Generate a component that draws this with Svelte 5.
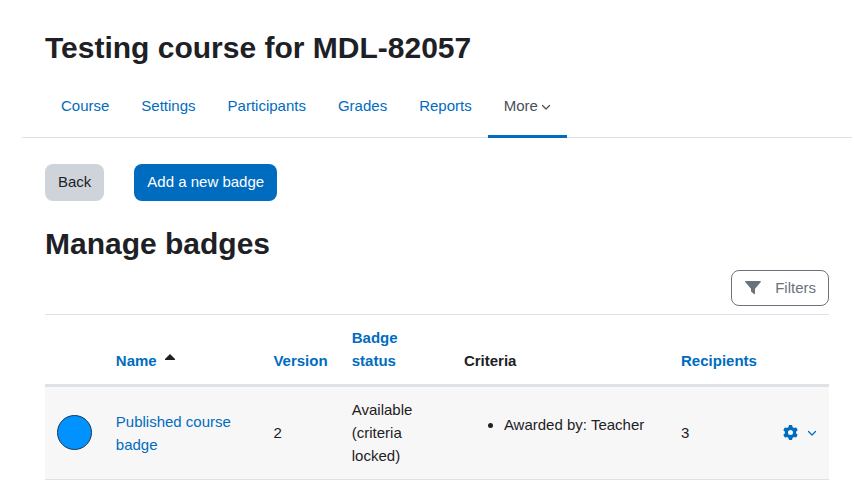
<script lang="ts">
  const tabs = ["Course", "Settings", "Participants", "Grades", "Reports"];

  const badges = [
    {
      name: "Published course badge",
      version: 2,
      status: "Available (criteria locked)",
      criteria: ["Awarded by: Teacher"],
      recipients: 3
    }
  ];
</script>

<main class="page">
  <h1>Testing course for MDL-82057</h1>

  <nav class="secondary-nav" aria-label="Course">
    {#each tabs as tab}
      <a class="tab" href="#{tab.toLowerCase()}">{tab}</a>
    {/each}
    <button class="tab active" type="button">
      More
      <svg class="chevron" viewBox="0 0 10 8" aria-hidden="true"><path d="M1.5 3.500 L5 7 L8.500 3.500" /></svg>
    </button>
  </nav>

  <div class="actions">
    <button class="btn secondary" type="button">Back</button>
    <button class="btn primary" type="button">Add a new badge</button>
  </div>

  <h2>Manage badges</h2>

  <div class="toolbar">
    <button class="btn outline" type="button">
      <svg class="filter" viewBox="0 0 16 16" aria-hidden="true">
        <path d="M.8 1 H15.200 C15.900 1 16.100 1.700 15.600 2.300 L10 8.800 V13.600 C10 14.200 9.500 14.400 9 14 L6.500 11.900 C6.200 11.700 6 11.400 6 11 V8.800 L.4 2.300 C-.1 1.700 .1 1 .8 1 Z" />
      </svg>
      Filters
    </button>
  </div>

  <table>
    <colgroup>
      <col class="image" />
      <col class="name" />
      <col class="version" />
      <col class="status" />
      <col class="criteria" />
      <col class="recipients" />
      <col class="menu" />
    </colgroup>
    <thead>
      <tr>
        <th></th>
        <th aria-sort="ascending">
          <a href="#name">Name</a>
          <svg class="sort" viewBox="0 0 10 6" aria-hidden="true"><path d="M5 0 L10 5 V6 H0 V5 Z" /></svg>
        </th>
        <th><a href="#version">Version</a></th>
        <th><a href="#status">Badge status</a></th>
        <th>Criteria</th>
        <th><a href="#recipients">Recipients</a></th>
        <th></th>
      </tr>
    </thead>
    <tbody>
      {#each badges as badge}
        <tr>
          <td>
            <svg class="badge-image" viewBox="0 0 35 35" aria-hidden="true"><circle cx="17.500" cy="17.500" r="17" /></svg>
          </td>
          <td><a href="#badge">{badge.name}</a></td>
          <td>{badge.version}</td>
          <td>{badge.status}</td>
          <td>
            <ul>
              {#each badge.criteria as item}
                <li>{item}</li>
              {/each}
            </ul>
          </td>
          <td>{badge.recipients}</td>
          <td>
            <button class="menu-button" type="button" aria-label="Actions">
              <svg class="gear" viewBox="0 0 512 512" aria-hidden="true">
                <path d="M495.900 166.600c3.200 8.700 .5 18.400-6.400 24.600l-43.300 39.400c1.100 8.300 1.700 16.800 1.700 25.400s-.6 17.100-1.700 25.400l43.300 39.400c6.900 6.200 9.600 15.900 6.400 24.600c-4.400 11.900-9.700 23.300-15.800 34.300l-4.700 8.100c-6.600 11-14 21.400-22.100 31.200c-5.900 7.200-15.700 9.600-24.500 6.800l-55.700-17.700c-13.400 10.300-28.200 18.900-44 25.400l-12.500 57.100c-2 9.100-9 16.300-18.200 17.800c-13.800 2.300-28 3.500-42.500 3.500s-28.700-1.200-42.500-3.500c-9.200-1.500-16.200-8.700-18.200-17.800l-12.500-57.100c-15.800-6.500-30.600-15.100-44-25.400L83.100 425.900c-8.800 2.800-18.600 .3-24.500-6.800c-8.100-9.800-15.500-20.200-22.100-31.200l-4.700-8.100c-6.100-11-11.400-22.400-15.800-34.300c-3.200-8.700-.5-18.400 6.400-24.600l43.300-39.400C64.600 273.100 64 264.600 64 256s.6-17.100 1.700-25.400L22.400 191.200c-6.900-6.200-9.600-15.900-6.400-24.600c4.400-11.900 9.700-23.300 15.800-34.300l4.700-8.100c6.600-11 14-21.400 22.100-31.200c5.900-7.200 15.700-9.600 24.500-6.800l55.700 17.700c13.400-10.300 28.200-18.900 44-25.400l12.500-57.100c2-9.100 9-16.300 18.200-17.800C227.300 1.200 241.500 0 256 0s28.700 1.200 42.500 3.500c9.200 1.500 16.200 8.700 18.200 17.800l12.500 57.100c15.800 6.500 30.600 15.100 44 25.400l55.700-17.700c8.800-2.800 18.600-.3 24.500 6.800c8.100 9.800 15.500 20.200 22.100 31.200l4.700 8.100c6.100 11 11.400 22.400 15.800 34.300zM256 342a86 86 0 1 0 0-172 86 86 0 1 0 0 172z" />
              </svg>
              <svg class="chevron" viewBox="0 0 10 8" aria-hidden="true"><path d="M1.500 2.500 L5 6 L8.500 2.500" /></svg>
            </button>
          </td>
        </tr>
      {/each}
    </tbody>
  </table>
</main>

<style>
  :global(body) {
    background: #fff;
    color: #1d2125;
    font-family: "Liberation Sans", Arial, sans-serif;
    font-size: 15px;
    line-height: 22px;
  }

  .page {
    padding: 30px 25px 16px 45px;
  }

  h1, h2 {
    margin: 0;
    font-size: 30px;
    line-height: 36px;
    font-weight: bold;
  }

  a {
    color: #006cbf;
    text-decoration: none;
  }

  button {
    font: inherit;
    cursor: pointer;
  }

  .secondary-nav {
    display: flex;
    margin: 8px -23px 26px;
    padding-left: 23px;
    border-bottom: 1px solid #dee2e6;
  }

  .tab {
    display: flex;
    align-items: center;
    gap: 3px;
    box-sizing: border-box;
    height: 64px;
    margin-bottom: -1px;
    padding: 0 16px;
    border: 0;
    border-top: 3px solid transparent;
    border-bottom: 3px solid transparent;
    background: none;
  }

  .tab.active {
    border-bottom-color: #006cbf;
    color: #495057;
  }

  .chevron {
    width: 10px;
    height: 8px;
    fill: none;
    stroke: currentColor;
    stroke-width: 1.2;
    stroke-linecap: round;
    stroke-linejoin: round;
  }

  .actions {
    display: flex;
    gap: 30px;
    margin-bottom: 25px;
  }

  .btn {
    padding: 6px 12px 7px;
    border: 1px solid transparent;
    border-radius: 8px;
  }

  .primary {
    background: #006cbf;
    color: #fff;
  }

  .secondary {
    background: #ced4da;
    color: #1d2125;
  }

  .toolbar {
    display: flex;
    justify-content: flex-end;
    margin: 8px 0;
  }

  .outline {
    display: flex;
    align-items: center;
    gap: 14px;
    padding: 6px 12px 6px 13px;
    border-color: #6a737b;
    background: #fff;
    color: #6a737b;
  }

  .filter {
    width: 16px;
    height: 16px;
    fill: currentColor;
  }

  table {
    width: 100%;
    table-layout: fixed;
    border-spacing: 0;
    border-top: 1px solid #dee2e6;
    line-height: 23px;
  }

  col.image, col.menu {
    width: 7.5%;
  }

  col.name {
    width: 20.1%;
  }

  col.version {
    width: 10%;
  }

  col.status {
    width: 14.3%;
  }

  col.criteria {
    width: 27.7%;
  }

  col.recipients {
    width: 12.9%;
  }

  th, td {
    padding: 11px 12px 12px;
    text-align: left;
  }

  th {
    vertical-align: bottom;
    border-bottom: 3px solid #dee2e6;
  }

  td {
    vertical-align: middle;
    border-bottom: 1px solid #dee2e6;
    background: #f7f7f7;
  }

  /* "Badge status" wraps onto two lines like the cells below it */
  th:nth-child(4), td:nth-child(4) {
    padding-right: 36px;
  }

  .sort {
    width: 10px;
    height: 6px;
    margin-left: 4px;
    vertical-align: 6px;
    fill: #1d2125;
  }

  .badge-image {
    display: block;
    width: 35px;
    height: 35px;
    fill: #0093ff;
    stroke: #173a56;
    stroke-width: 1;
  }

  ul {
    margin: 0 0 16px;
    padding-left: 40px;
  }

  .menu-button {
    display: flex;
    align-items: center;
    gap: 9px;
    margin-left: auto;
    padding: 0;
    border: 0;
    background: none;
    color: #006cbf;
  }

  .gear {
    width: 15px;
    height: 15px;
    fill: currentColor;
  }
</style>
